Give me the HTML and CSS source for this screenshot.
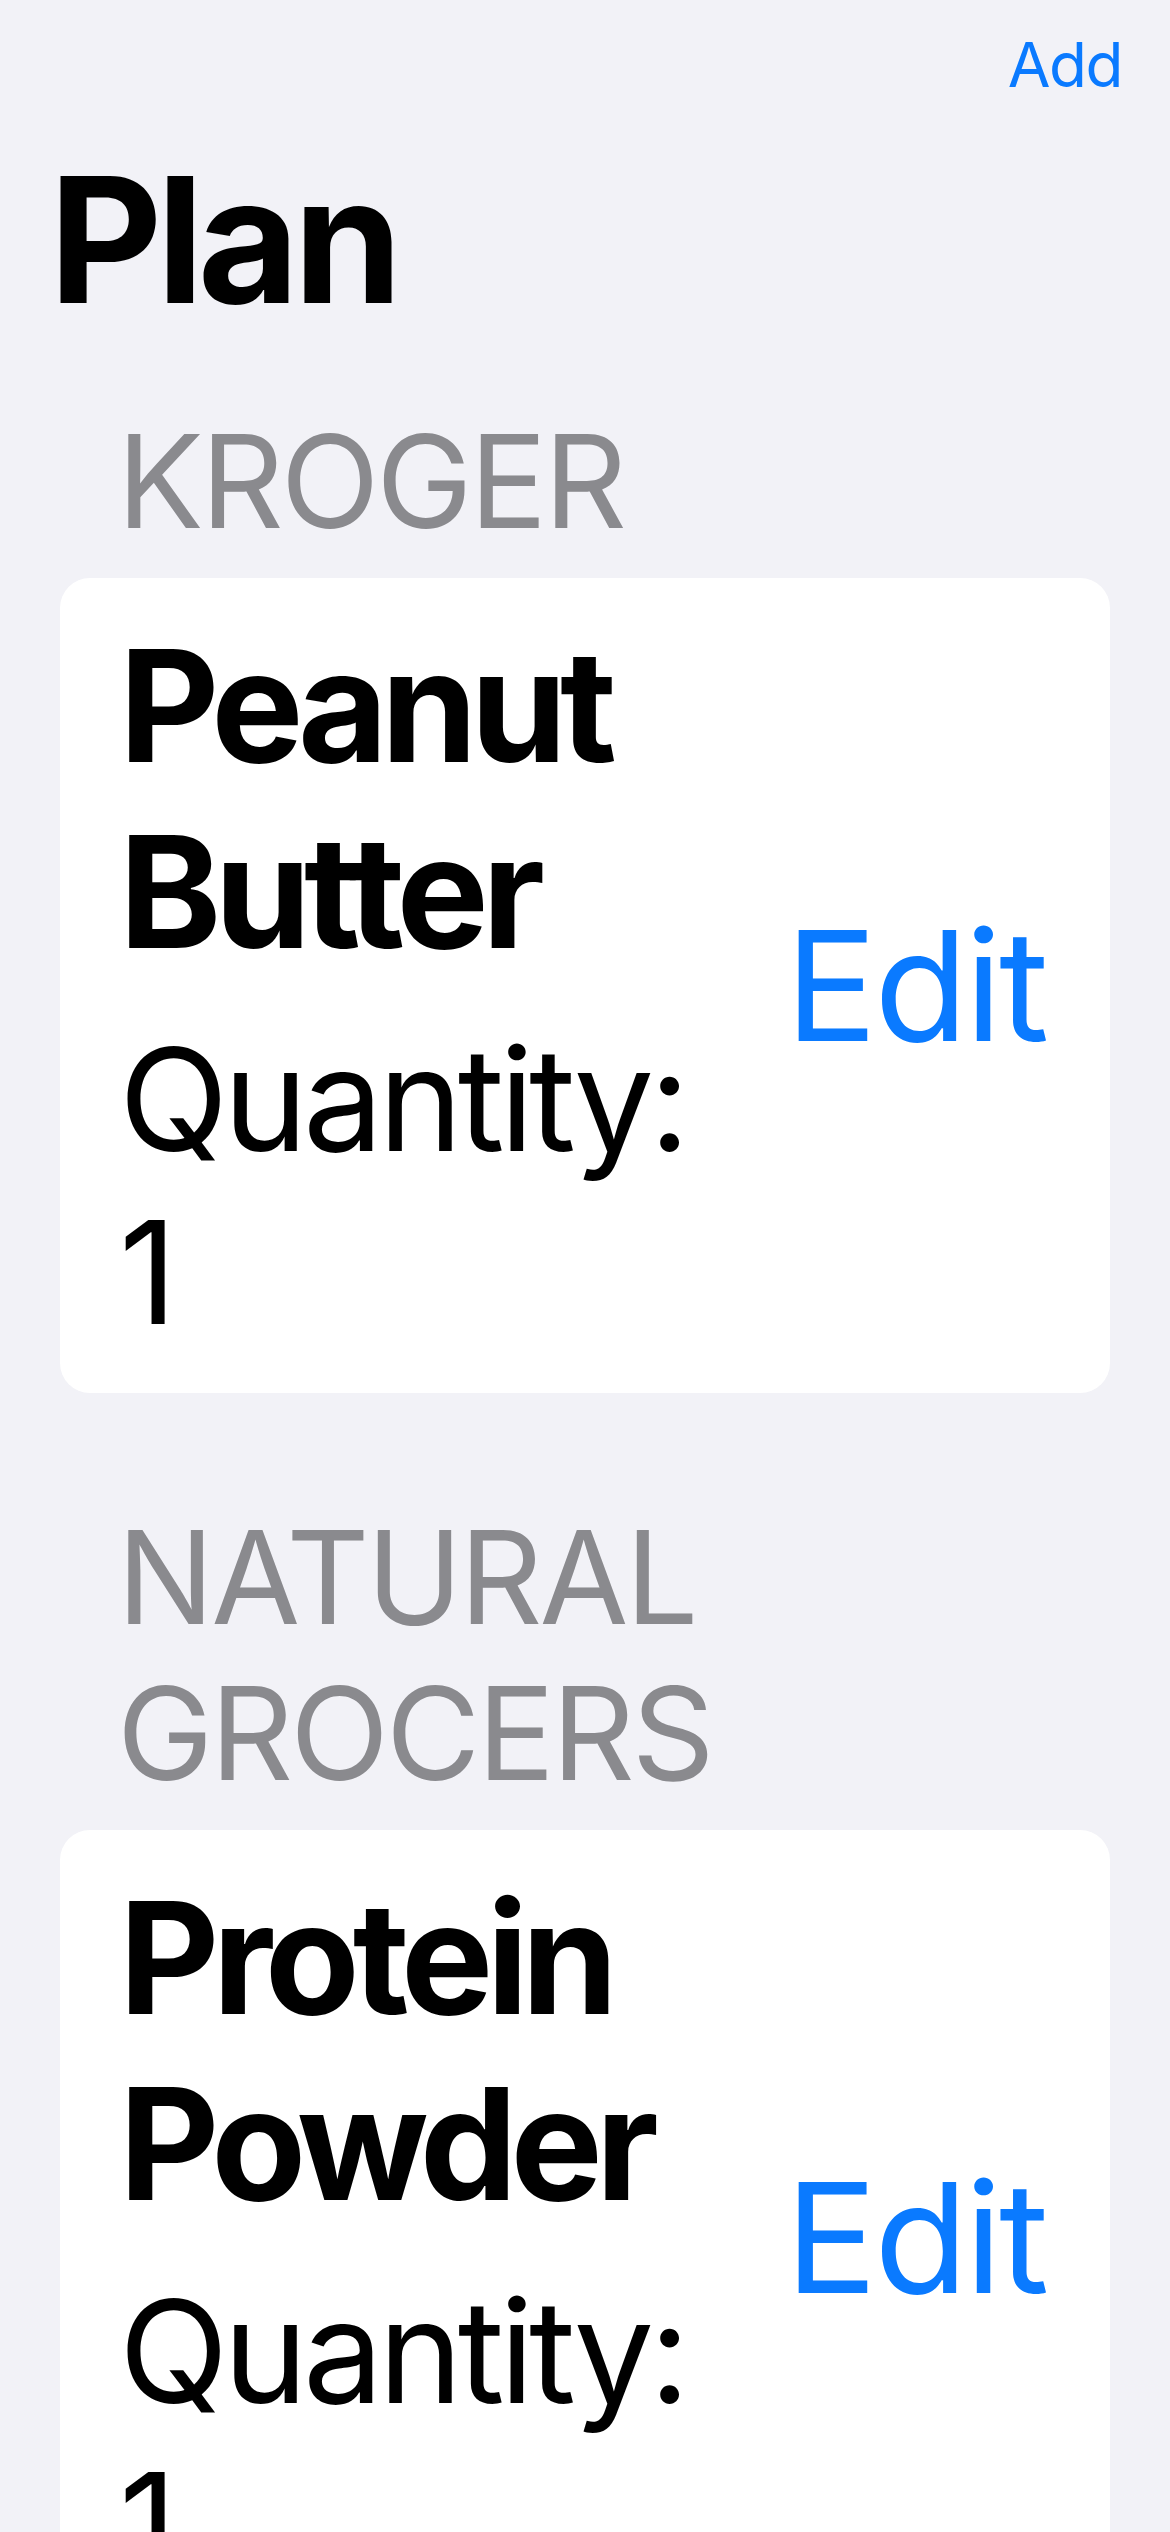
FILE: index.html
```html
<!DOCTYPE html>
<html lang="en">
<head>
<meta charset="utf-8">
<title>Plan</title>
<link rel="stylesheet" href="styles.css">
</head>
<body>
<div class="screen">
  <nav class="nav">
    <a class="nav-add">Add</a>
  </nav>
  <h1 class="title">Plan</h1>

  <section class="section section-first">
    <h2 class="section-header">KROGER</h2>
    <div class="card">
      <div class="card-text">
        <div class="item-name">Peanut Butter</div>
        <div class="item-qty">Quantity: 1</div>
      </div>
      <a class="edit">Edit</a>
    </div>
  </section>

  <section class="section">
    <h2 class="section-header">NATURAL GROCERS</h2>
    <div class="card">
      <div class="card-text">
        <div class="item-name">Protein Powder</div>
        <div class="item-qty">Quantity: 1</div>
      </div>
      <a class="edit">Edit</a>
    </div>
  </section>
</div>
</body>
</html>
```

FILE: styles.css
```css
html, body {
  margin: 0;
  padding: 0;
  background: #f2f2f7;
}

body {
  font-family: Inter, "Noto Sans", sans-serif;
  color: #000;
  overflow: hidden;
  height: 2532px;
}

.screen {
  width: 1170px;
}

.nav {
  display: flex;
  justify-content: flex-end;
  padding: 25px 48px 0 0;
}

.nav-add {
  font-size: 62px;
  line-height: 80px;
  letter-spacing: -1.5px;
  color: #0a7aff;
}

.title {
  margin: 29px 0 0 49px;
  font-size: 175px;
  line-height: 210px;
  font-weight: 700;
  letter-spacing: -6px;
}

.section {
  margin-top: 106px;
}

.section-first {
  margin-top: 59px;
}

.section-header {
  margin: 0 0 19px 117px;
  font-size: 129px;
  line-height: 156px;
  font-weight: 400;
  letter-spacing: -3px;
  color: #8a8a8e;
}

.card {
  margin: 0 60px;
  background: #fff;
  border-radius: 30px;
  display: flex;
  align-items: center;
  padding: 35px 64px 35px 59px;
}

.card-text {
  flex: 1;
  min-width: 0;
}

.item-name {
  font-size: 155px;
  line-height: 186px;
  font-weight: 700;
  letter-spacing: -7px;
}

.item-qty {
  margin-top: 27px;
  font-size: 143px;
  line-height: 173px;
  letter-spacing: -5px;
}

.edit {
  margin-left: 30px;
  font-size: 153px;
  line-height: 184px;
  letter-spacing: -3px;
  color: #0a7aff;
}
```
